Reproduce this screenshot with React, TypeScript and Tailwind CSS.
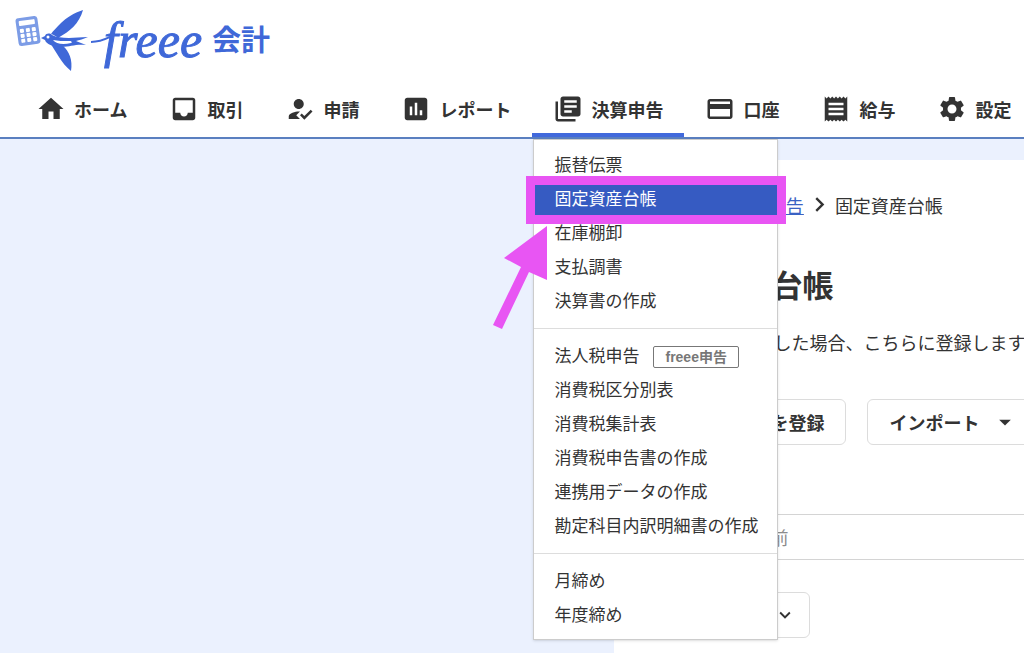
import type { ReactNode } from "react";
import type { IconType } from "react-icons";
import {
  MdAdd,
  MdAssessment,
  MdChevronRight,
  MdCreditCard,
  MdHome,
  MdHowToReg,
  MdInbox,
  MdLibraryBooks,
  MdReceipt,
  MdSettings,
  MdArrowDropDown,
  MdExpandMore,
} from "react-icons/md";

type NavEntry = { label: string; icon: IconType; active?: boolean };
type MenuEntry = { label: string; badge?: string; selected?: boolean };

const navItems: NavEntry[] = [
  { label: "ホーム", icon: MdHome },
  { label: "取引", icon: MdInbox },
  { label: "申請", icon: MdHowToReg },
  { label: "レポート", icon: MdAssessment },
  { label: "決算申告", icon: MdLibraryBooks, active: true },
  { label: "口座", icon: MdCreditCard },
  { label: "給与", icon: MdReceipt },
  { label: "設定", icon: MdSettings },
];

const menuGroups: MenuEntry[][] = [
  [
    { label: "振替伝票" },
    { label: "固定資産台帳", selected: true },
    { label: "在庫棚卸" },
    { label: "支払調書" },
    { label: "決算書の作成" },
  ],
  [
    { label: "法人税申告", badge: "freee申告" },
    { label: "消費税区分別表" },
    { label: "消費税集計表" },
    { label: "消費税申告書の作成" },
    { label: "連携用データの作成" },
    { label: "勘定科目内訳明細書の作成" },
  ],
  [{ label: "月締め" }, { label: "年度締め" }],
];

function Logo() {
  return (
    <a href="#" className="flex h-20 items-center pl-3 text-[#3f68d8]">
      <svg width="98" height="72" viewBox="12 4 98 72" fill="currentColor" aria-hidden="true">
        <g transform="rotate(-8 28 31)" fill="#7c9ce6">
          <rect x="17" y="17" width="22" height="28" rx="3" />
          <rect x="20" y="20" width="16" height="5" rx="1" fill="#fff" />
          {[28, 33, 38].map((y) =>
            [20, 26, 32].map((x) => (
              <rect key={`${x}-${y}`} x={x} y={y} width="4" height="4" rx="1" fill="#fff" />
            ))
          )}
        </g>
        <path d="M83 10C74 13 66 18 61 23C57 27 53 31 51 34C54 35 56 36 58 38C70 31 79 24 83 10Z" />
        <path d="M50 43C56 51 61 63 71 71C73 60 69 51 63 46C58 46 54 45 50 43Z" />
        <path
          d="M41 38L45 36C46 33 50 33 52 35C60 39 72 38 88 37C84 39 79 40 76 41C79 42 83 44 86 45C75 44 70 47 62 47C53 47 46 44 45 40ZM53 40C56 44 63 45 71 43C73 42 71 41 69 41C63 41 58 41 53 40Z"
          fillRule="evenodd"
        />
        <circle cx="48" cy="37" r="1.5" fill="#fff" />
        <path d="M91 42C98 42 104 40 110 37" fill="none" stroke="currentColor" strokeWidth="2" />
      </svg>
      <span className="-ml-1.5 font-['Liberation_Serif',serif] text-[50px] italic leading-none [-webkit-text-stroke:1px]">
        freee
      </span>
      <span className="ml-2.5 pb-1 text-[29px] font-bold leading-none">会計</span>
    </a>
  );
}

function MenuItem({ label, badge, selected }: MenuEntry) {
  return (
    <li>
      <a
        href="#"
        className={`flex h-[34px] items-center pl-5 text-[17px] ${
          selected ? "bg-[#365bc2] text-white" : "text-[#333]"
        }`}
      >
        {label}
        {badge && (
          <span className="ml-3.5 mt-1 flex h-[22px] items-center rounded-xs border border-[#777] px-[11px] font-['Liberation_Sans','Noto_Sans_CJK_JP',sans-serif] text-sm font-bold text-[#777]">
            {badge}
          </span>
        )}
      </a>
    </li>
  );
}

function SettlementMenu() {
  return (
    <div className="absolute left-px top-full z-10 mt-0.5 w-[245px] border border-[#ccc] bg-white shadow-sm">
      {menuGroups.map((group, i) => (
        <ul
          key={i}
          className="border-t border-[#ddd] pb-[11px] pt-[9px] first:border-t-0 first:pt-[7px] last-of-type:pb-2"
        >
          {group.map((item) => (
            <MenuItem key={item.label} {...item} />
          ))}
        </ul>
      ))}
      {/* highlight frame and pointer over the selected entry */}
      <div className="pointer-events-none absolute -left-2 -right-[9px] top-9 h-12 border-[9px] border-[#e855f3]" />
      <svg
        className="pointer-events-none absolute -left-[42px] top-[86px]"
        width="56"
        height="104"
        viewBox="492 226 56 104"
        fill="#e855f3"
        aria-hidden="true"
      >
        <path d="M547 226L504 258L521 267L493 325L502 329L529 272L547 280Z" />
      </svg>
    </div>
  );
}

function GlobalNav() {
  return (
    <nav>
      <ul className="flex pl-[15px]">
        {navItems.map(({ label, icon: Icon, active }) => (
          <li key={label} className="relative shrink-0">
            <a
              href="#"
              className={`flex h-[57px] items-center gap-2 px-[21px] text-lg font-bold ${
                active ? "shadow-[inset_0_-4px_0_#4169dc]" : ""
              }`}
            >
              <Icon className="size-[30px]" />
              {label}
            </a>
            {active && <SettlementMenu />}
          </li>
        ))}
      </ul>
    </nav>
  );
}

function OutlineButton({ children }: { children: ReactNode }) {
  return (
    <button
      type="button"
      className="flex h-[46px] shrink-0 items-center rounded-md border border-[#dcdcdc] bg-white px-[21px] text-lg font-bold"
    >
      {children}
    </button>
  );
}

function AssetLedger() {
  return (
    <section className="mt-[21px] w-2/5 bg-white pb-3 pl-[33px] pt-[31px]">
      <nav className="flex h-[27px] items-center whitespace-nowrap text-lg">
        <a href="#" className="text-[#3a62c4] underline">ホーム</a>
        <MdChevronRight className="mx-px size-[29px] shrink-0" />
        <a href="#" className="text-[#3a62c4] underline">決算申告</a>
        <MdChevronRight className="mx-px size-[29px] shrink-0" />
        <span>固定資産台帳</span>
      </nav>
      <h1 className="mt-12 whitespace-nowrap text-[31px] font-bold leading-9">固定資産台帳</h1>
      <p className="mt-[26px] whitespace-nowrap text-lg leading-7">固定資産を購入した場合、こちらに登録します</p>
      <div className="mt-[43px] flex gap-[21px]">
        <OutlineButton>
          <MdAdd className="mr-[5px] size-6" />
          固定資産を登録
        </OutlineButton>
        <OutlineButton>
          インポート
          <MdArrowDropDown className="ml-3 size-7" />
        </OutlineButton>
      </div>
      <label htmlFor="asset-name" className="mb-2 mt-[41px] block text-sm">
        名前
      </label>
      <input
        id="asset-name"
        type="text"
        placeholder="固定資産の名前"
        className="h-[46px] w-full border-y border-l border-[#d4d4d4] px-3.5 text-lg placeholder:text-[#8c8c8c]"
      />
      <div className="relative mt-8 w-[163px]">
        <select
          aria-label="表示"
          className="h-[46px] w-full appearance-none rounded-md border border-[#dcdcdc] bg-white px-3.5 text-lg"
        >
          <option>すべて</option>
        </select>
        <MdExpandMore className="pointer-events-none absolute right-3.5 top-3 size-[22px]" />
      </div>
    </section>
  );
}

function App() {
  return (
    <div className="flex min-h-screen flex-col overflow-x-hidden bg-[#ebf1fe] font-['Noto_Sans_CJK_JP',sans-serif] text-[#333]">
      <header className="border-b-2 border-[#5a7fc0] bg-white">
        <Logo />
        <GlobalNav />
      </header>
      <main className="flex flex-1 justify-end">
        <AssetLedger />
      </main>
    </div>
  );
}

export default App;
